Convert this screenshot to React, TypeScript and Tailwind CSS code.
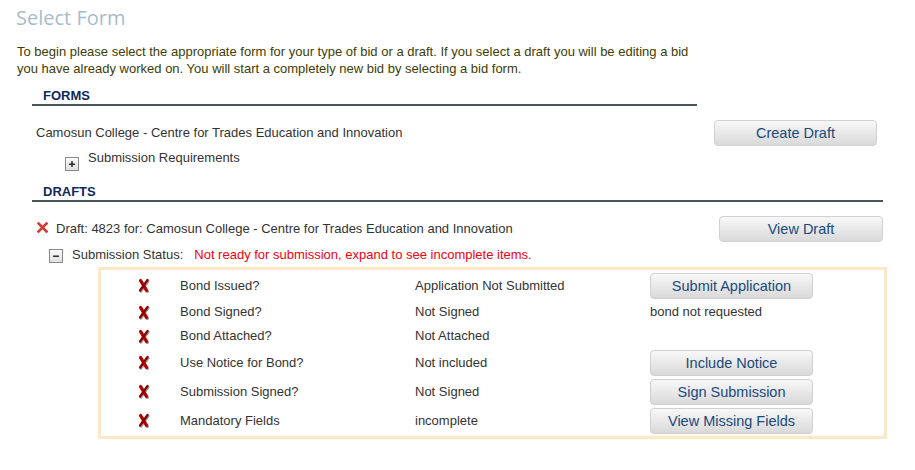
import React from "react";

const Btn = ({ label, w = "w-[163px]" }: { label: string; w?: string }) => (
  <button
    className={`${w} h-[26px] rounded-[4px] border border-[#d0d0d0] bg-gradient-to-b from-[#f8f8f8] to-[#d9d9d9] text-[14.5px] leading-[24px] text-[#1b4a7c] text-center`}
    style={{ fontFamily: '"Liberation Sans", Arial, sans-serif' }}
  >
    {label}
  </button>
);

const ToggleBox = ({ sign }: { sign: "+" | "-" }) => (
  <span className="inline-flex w-[14px] h-[14px] border border-[#8a8a8a] bg-gradient-to-b from-[#fafafa] to-[#e0e0e0] items-center justify-center">
    <svg width="8" height="8" viewBox="0 0 8 8">
      <rect x="1" y="3.5" width="6" height="1.4" fill="#222" />
      {sign === "+" && <rect x="3.3" y="1" width="1.4" height="6" fill="#222" />}
    </svg>
  </span>
);

const BigX = () => (
  <svg width="14" height="15" viewBox="0 0 14 15">
    <path d="M4.5 3.5 L10.5 13.5" stroke="#9a9a9a" strokeWidth="3" strokeLinecap="round" />
    <path d="M11.5 3 L4 13.5" stroke="#9a9a9a" strokeWidth="2.2" strokeLinecap="round" />
    <path d="M3.5 2.5 L9.5 12.5" stroke="#b30000" strokeWidth="3.2" strokeLinecap="round" />
    <path d="M10.5 2 L3 12.5" stroke="#8a0000" strokeWidth="2.2" strokeLinecap="round" />
  </svg>
);

const SmallX = () => (
  <svg width="11" height="11" viewBox="0 0 11 11">
    <path d="M1.5 1.5 L9.5 9.5 M9.5 1.5 L1.5 9.5" stroke="#d23a35" strokeWidth="2.6" strokeLinecap="square" />
  </svg>
);

type Row = { label: string; value: string; action?: string; note?: string; h: string };

const rows: Row[] = [
  { label: "Bond Issued?", value: "Application Not Submitted", action: "Submit Application", h: "h-[29px]" },
  { label: "Bond Signed?", value: "Not Signed", note: "bond not requested", h: "h-[24px]" },
  { label: "Bond Attached?", value: "Not Attached", h: "h-[24px]" },
  { label: "Use Notice for Bond?", value: "Not included", action: "Include Notice", h: "h-[29px]" },
  { label: "Submission Signed?", value: "Not Signed", action: "Sign Submission", h: "h-[29px]" },
  { label: "Mandatory Fields", value: "incomplete", action: "View Missing Fields", h: "h-[29px]" },
];

export default function App() {
  return (
    <div
      className="w-[915px] h-[470px] overflow-hidden bg-white text-[13px] text-[#333333]"
      style={{ fontFamily: '"Liberation Sans", Arial, sans-serif' }}
    >
      <div
        className="pl-[16px] pt-[4px] h-[32px] text-[20px] leading-[28px] text-[#a9bbcb]"
        style={{ fontFamily: '"Open Sans", sans-serif' }}
      >
        Select Form
      </div>
      <p className="mt-[11px] pl-[17px] leading-[17px] text-[#3d3d05]">
        To begin please select the appropriate form for your type of bid or a draft. If you select a draft you will be editing a bid
        <br />
        you have already worked on. You will start a completely new bid by selecting a bid form.
      </p>

      {/* FORMS */}
      <div className="ml-[32px] mt-[11px] flex">
        <div className="w-[665px]">
          <div className="pl-[11px] h-[18px] leading-[16px] font-bold text-[#10295a] border-b-2 border-[#475757]">
            FORMS
          </div>
          <div className="mt-[14px] h-[26px] flex items-center pl-[4px]">
            Camosun College - Centre for Trades Education and Innovation
          </div>
          <div className="h-[24px] flex items-start pl-[33px] pt-[5px] gap-[9px]">
            <span className="mt-[3px]"><ToggleBox sign="+" /></span>
            <span className="leading-[14px]">Submission Requirements</span>
          </div>
        </div>
        <div className="pl-[17px] pt-[32px]">
          <Btn label="Create Draft" />
        </div>
      </div>

      {/* DRAFTS */}
      <div className="ml-[32px] mt-[14px] w-[851px]">
        <div className="pl-[11px] h-[18px] leading-[16px] font-bold text-[#10295a] border-b-2 border-[#475757]">
          DRAFTS
        </div>
        <div className="mt-[14px] h-[26px] flex items-center justify-between">
          <div className="flex items-center">
            <span className="ml-[5px] mr-[8px] -mt-[4px]"><SmallX /></span>
            <span>Draft: 4823 for: Camosun College - Centre for Trades Education and Innovation</span>
          </div>
          <Btn label="View Draft" w="w-[164px]" />
        </div>
        <div className="h-[25px] flex items-center pl-[17px]">
          <span className="mt-[3px] mr-[9px]"><ToggleBox sign="-" /></span>
          <span>Submission Status:</span>
          <span className="ml-[11px] text-[#f20010]">Not ready for submission, expand to see incomplete items.</span>
        </div>
      </div>

      <div className="ml-[98px] w-[789px] border-[3px] border-[#fde8c9] py-[1px]">
        {rows.map((r) => (
          <div key={r.label} className={`${r.h} grid grid-cols-[79px_235px_235px_1fr] items-center`}>
            <div className="pl-[36px] flex items-center"><BigX /></div>
            <div>{r.label}</div>
            <div>{r.value}</div>
            <div>{r.action ? <Btn label={r.action} /> : r.note ?? null}</div>
          </div>
        ))}
      </div>
    </div>
  );
}
